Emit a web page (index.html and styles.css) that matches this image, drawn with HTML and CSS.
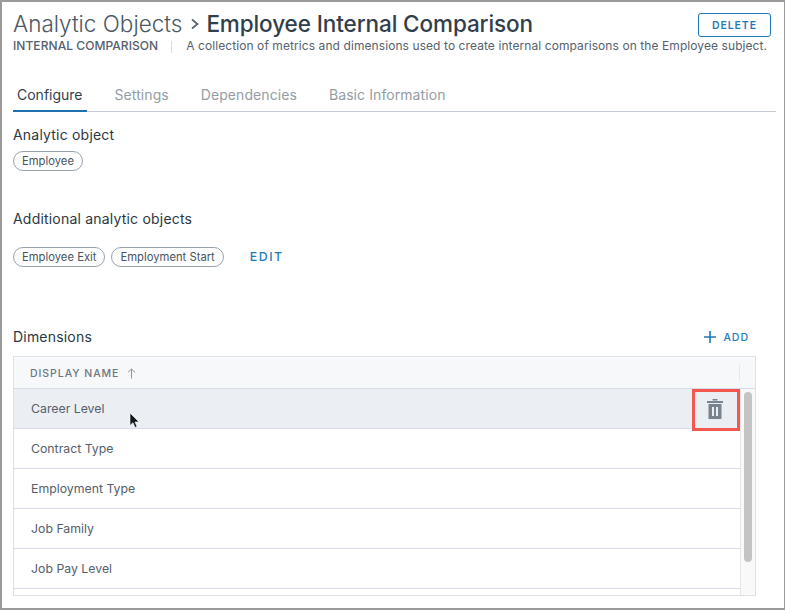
FILE: index.html
```html
<!DOCTYPE html>
<html lang="en">
<head>
<meta charset="utf-8">
<title>Employee Internal Comparison</title>
<link rel="stylesheet" href="styles.css">
</head>
<body>
<main class="frame">
  <header class="head">
    <div class="head-text">
      <h1 class="title"><span class="crumb">Analytic Objects</span><svg class="chev" width="10" height="12" viewBox="0 0 10 12"><path d="M2 1.5 7.5 6 2 10.500" fill="none" stroke="#56636f" stroke-width="1.700"/></svg><span class="current">Employee Internal Comparison</span></h1>
      <p class="sub"><span class="kind">INTERNAL COMPARISON</span><span class="sep"></span><span class="desc">A collection of metrics and dimensions used to create internal comparisons on the Employee subject.</span></p>
    </div>
    <button class="delete">DELETE</button>
  </header>
  <nav class="tabs">
    <a class="tab active">Configure</a>
    <a class="tab">Settings</a>
    <a class="tab">Dependencies</a>
    <a class="tab">Basic Information</a>
  </nav>
  <section class="block first">
    <h2 class="label">Analytic object</h2>
    <div class="pills"><span class="pill">Employee</span></div>
  </section>
  <section class="block second">
    <h2 class="label">Additional analytic objects</h2>
    <div class="pills roomy"><span class="pill">Employee Exit</span><span class="pill">Employment Start</span><a class="edit">EDIT</a></div>
  </section>
  <section class="dims">
    <div class="dims-head">
      <h2 class="label">Dimensions</h2>
      <a class="add"><svg width="14" height="14" viewBox="0 0 14 14"><path d="M7 1v12M1 7h12" stroke="#1f7ab8" stroke-width="1.600" fill="none"/></svg>ADD</a>
    </div>
    <div class="table">
      <div class="thead"><span class="th">DISPLAY NAME</span><svg class="arrow" width="9" height="11" viewBox="0 0 9 11"><path d="M4.500 10.500V1M1 4.300 4.500 1 8 4.300" fill="none" stroke="#8c96a0" stroke-width="1"/></svg><span class="thead-sep"></span></div>
      <div class="tbody">
        <div class="rows">
          <div class="row hover">Career Level</div>
          <div class="row">Contract Type</div>
          <div class="row">Employment Type</div>
          <div class="row">Job Family</div>
          <div class="row">Job Pay Level</div>
          <div class="row stub"></div>
        </div>
        <div class="scroll"><span class="thumb"></span></div>
        <div class="callout"><svg width="16" height="20" viewBox="0 0 16 20"><path d="M5.500 1.500h5V0h-5zM0 2h16v2H0z" fill="#79838e"/><path fill-rule="evenodd" d="M1.500 5h13v15h-13zM5 8v9h2V8zM9 8v9h2V8z" fill="#79838e"/></svg></div>
        <svg class="cursor" width="11" height="17" viewBox="0 0 11 17"><path d="M1 1v12.500l3-2.800 2 4.800 2-.9-2-4.600h4z" fill="#15191d" stroke="#fff" stroke-width=".6"/></svg>
      </div>
    </div>
  </section>
</main>
</body>
</html>
```
FILE: styles.css
```css
* { box-sizing: border-box; }
html, body { margin: 0; padding: 0; }
body { width: 785px; height: 610px; overflow: hidden; background: #fff; font-family: "Inter", "Liberation Sans", sans-serif; color: #2f3b47; }
.frame { width: 785px; height: 610px; border: 1px solid #9a9a9a; border-width: 2px 1px 2px 2px; padding: 0 8px 0 11px; display: flex; flex-direction: column; overflow: hidden; }
.head { display: flex; justify-content: space-between; align-items: flex-start; padding-top: 9px; height: 62px; }
.head-text { flex: 1; min-width: 0; }
.title { margin: 0; display: flex; align-items: center; font-size: 22.500px; line-height: 25px; font-weight: 400; white-space: nowrap; }
.crumb { color: #4c5863; font-weight: 300; }
.chev { margin: 0 6px 0 8px; flex: none; }
.current { color: #313e4b; font-weight: 500; letter-spacing: -.1px; }
.sub { margin: 2px 0 0; display: flex; align-items: center; font-size: 12px; line-height: 16px; white-space: nowrap; }
.kind { flex: none; color: #55616c; font-weight: 500; letter-spacing: .06px; }
.sep { flex: none; width: 1px; height: 12px; background: #d5dbe1; margin: 2px 14px 0 13px; }
.desc { flex: none; color: #56626d; letter-spacing: .08px; }
.delete { flex: none; width: 73px; height: 24px; margin: 2px 5px 0 0; background: #fff; border: 1px solid #1f7ab8; border-radius: 3px; color: #1f7ab8; font: 600 10.500px "Inter", sans-serif; letter-spacing: .9px; padding: 0; }
.tabs { display: flex; gap: 24px; height: 48px; align-items: flex-end; border-bottom: 1px solid #c3cad1; }
.tab { font-size: 14px; line-height: 19px; padding: 0 4px 6px; color: #949ca4; margin-bottom: -1px; border-bottom: 2px solid transparent; letter-spacing: .08px; }
.tab.active { color: #34414d; border-bottom-color: #1f72ad; letter-spacing: 0; }
.label { margin: 0; font-size: 14px; line-height: 18px; font-weight: 400; color: #2b3742; letter-spacing: .2px; }
.block.first { padding-top: 14px; height: 98px; }
.block.second { height: 115px; padding-top: 0; }
.pills { display: flex; margin-top: 7px; gap: 6px; align-items: center; }
.pills.roomy { margin-top: 19px; }
.pill { height: 20px; border: 1px solid #98a2ab; border-radius: 10px; padding: 0 8px; font-size: 11.250px; line-height: 18px; color: #47535e; white-space: nowrap; }
.edit { margin: 0 0 2px 20px; color: #1f7ab8; font-size: 12.300px; font-weight: 500; letter-spacing: 1.550px; }
.dims-head { display: flex; justify-content: space-between; align-items: center; height: 24px; width: 736px; margin-bottom: 7px; }
.add { display: flex; align-items: center; gap: 6px; color: #1f7ab8; font-size: 10.500px; font-weight: 500; letter-spacing: 1px; }
.table { width: 743px; height: 240px; border: 1px solid #dde2e9; overflow: hidden; }
.thead { position: relative; height: 32px; padding-top: 1px; background: #f7f8fa; border-bottom: 1px solid #d6dde6; display: flex; align-items: center; padding-left: 16px; }
.th { font-size: 10.500px; font-weight: 500; letter-spacing: .95px; color: #6d7780; }
.arrow { margin-left: 8px; }
.thead-sep { position: absolute; right: 15px; top: 8px; height: 16px; width: 1px; background: #e5e8ec; }
.tbody { position: relative; display: flex; height: 207px; }
.rows { flex: 1; }
.row { height: 40px; padding-left: 17px; border-bottom: 1px solid #d6dde6; font-size: 12.300px; line-height: 39px; color: #55606b; }
.row.hover { background: #ebeef3; }
.row.stub { height: 7px; border-bottom: 0; }
.scroll { width: 15px; background: #f9f9f9; border-left: 1px solid #e6e6e6; padding: 3px 3px 0 3px; }
.thumb { display: block; width: 8px; height: 170px; border-radius: 4px; background: #c4c4c4; }
.callout { position: absolute; left: 678px; top: 0; width: 48px; height: 42px; border: 3px solid #f4574e; display: flex; align-items: center; justify-content: center; padding-right: 2px; padding-bottom: 3px; }
.cursor { position: absolute; left: 115px; top: 23px; }
```
